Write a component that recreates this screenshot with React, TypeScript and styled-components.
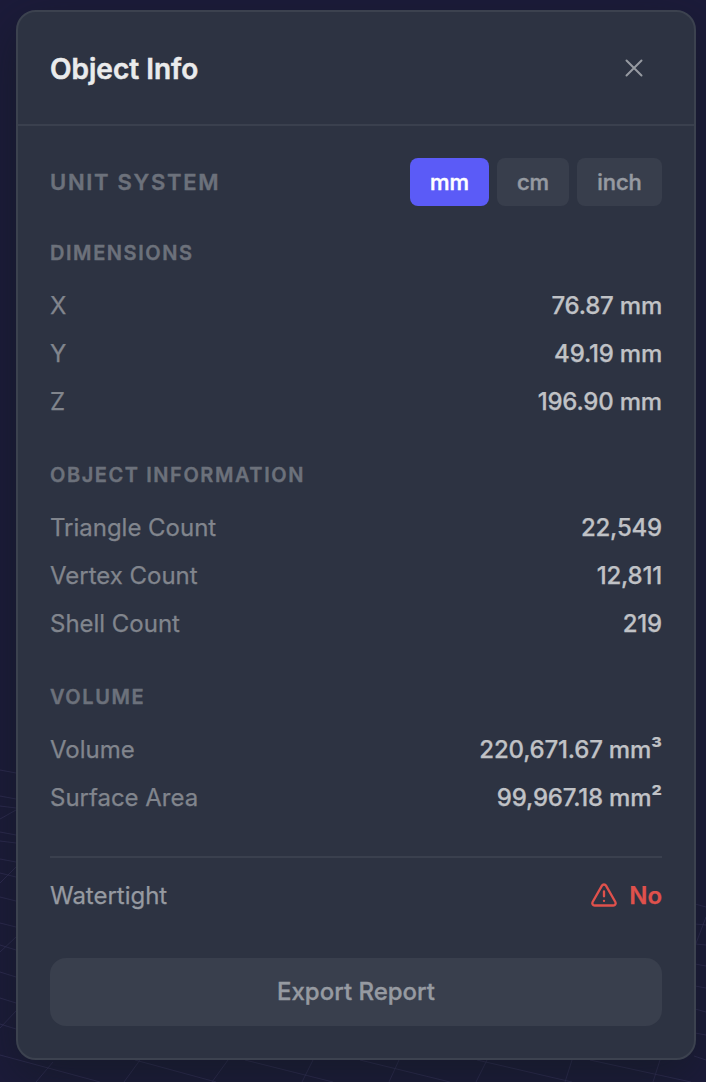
import React from 'react';
import styled, { createGlobalStyle } from 'styled-components';

const Global = createGlobalStyle`
  * { box-sizing: border-box; }
  body { margin: 0; background: #1b1a36; font-family: Inter, "Liberation Sans", sans-serif; }
`;
const Page = styled.main`
  position: relative; height: 1082px; padding: 10px 10px 22px 16px; overflow: hidden;
  background: #1c1b3a;
`;
const Floor = styled.svg` position: absolute; inset: 0; `;
const Panel = styled.section`
  position: relative;
  height: 1050px; border: 2px solid #3c424f; border-radius: 20px; background: #2d3342;
  box-shadow: 0 16px 48px rgba(18, 26, 32, 0.6);
  -webkit-text-stroke: 0.25px currentColor;
`;
const Header = styled.header`
  height: 114px; padding: 2px 32px 0; display: flex; align-items: center; justify-content: space-between;
  border-bottom: 2px solid #3a404e;
`;
const Title = styled.h1`
  margin: 0; font-size: 28px; line-height: 34px; font-weight: 600; color: #eaebec; -webkit-text-stroke: 0.5px currentColor;
`;
const Close = styled.button`
  width: 56px; height: 56px; padding: 0 0 2px; border: 0; background: none; display: grid; place-items: center; color: #969aa1;
`;
const Body = styled.div` padding: 32px; `;
const Units = styled.div` display: flex; align-items: center; justify-content: space-between; height: 48px; `;
const UnitLabel = styled.span` font-size: 22px; font-weight: 600; letter-spacing: 1.7px; color: #6c717b; -webkit-text-stroke: 0.4px currentColor; `;
const UnitGroup = styled.div` display: flex; gap: 8px; `;
const UnitButton = styled.button<{ $active?: boolean; $width: number }>`
  width: ${p => p.$width}px; height: 48px; padding: 0; border: 0; border-radius: 8px;
  font: 500 22px Inter, sans-serif; -webkit-text-stroke: 0.5px currentColor;
  background: ${p => (p.$active ? '#5b5bf7' : '#383e4c')}; color: ${p => (p.$active ? '#fff' : '#969aa1')};
`;
const Section = styled.section` margin-top: 32px; & + & { margin-top: 35px; } `;
const Heading = styled.h2`
  margin: 0 0 13px; font-size: 20px; line-height: 30px; font-weight: 600; letter-spacing: 1.57px; color: #6c717b;
  -webkit-text-stroke: 0.4px currentColor;
`;
const Row = styled.div`
  height: 48px; display: flex; align-items: center; justify-content: space-between;
  font-size: 24px; color: #81858d; letter-spacing: -0.02px;
`;
const Value = styled.span` font-weight: 500; letter-spacing: -0.2px; color: #c0c2c6; `;
const Exponent = styled.span` display: inline-block; font-weight: 600; transform: translateY(-1px); `;
const Status = styled(Row)` margin-top: 35px; height: 76px; border-top: 2px solid #3a404e; color: #969aa1; `;
const Warning = styled.span` display: flex; align-items: center; gap: 11px; font-weight: 600; color: #df514c; `;
const Export = styled.button`
  width: 100%; height: 68px; margin-top: 26px; padding: 0 0 2px; border: 0; border-radius: 16px;
  background: #393f4d; color: #969aa1; font: 500 24px Inter, sans-serif; -webkit-text-stroke: 0.35px currentColor;
`;

const units = [{ name: 'mm', width: 79 }, { name: 'cm', width: 72 }, { name: 'inch', width: 85 }];
const groups: { title: string; rows: [string, string, string?][] }[] = [
  { title: 'DIMENSIONS', rows: [['X', '76.87 mm'], ['Y', '49.19 mm'], ['Z', '196.90 mm']] },
  { title: 'OBJECT INFORMATION', rows: [['Triangle Count', '22,549'], ['Vertex Count', '12,811'], ['Shell Count', '219']] },
  { title: 'VOLUME', rows: [['Volume', '220,671.67 mm', '³'], ['Surface Area', '99,967.18 mm', '²']] },
];

export default function App() {
  return (
    <Page>
      <Global />
      <Floor width="706" height="1082" viewBox="0 0 706 1082" fill="none" stroke="#3a3560" strokeOpacity="0.6" aria-hidden="true">
        <path d="M0 770 16 773M0 796 16 799M0 806 16 808M0 832 16 835M0 841 16 843M0 859 16 862M0 873 16 877M0 897 16 901M0 923 16 927M0 945 16 950M0 972 16 977M0 998 16 1003M0 1024 16 1029M0 1055 100 1082M135 1060 216 1082M245 1060 333 1082M360 1060 450 1082M477 1060 572 1082M590 1060 691 1082M694 1056 706 1060" />
        <path d="M0 819 16 810M0 883 16 867M0 952 16 937M0 1028 16 1011M36 1082 53 1062M124 1082 140 1060M212 1082 228 1060M302 1082 313 1060M389 1082 399 1060M476 1082 487 1060M565 1082 572 1060M653 1082 660 1060M695 946 706 917M695 904 706 907M695 924 706 925M695 944 706 945M695 964 706 966M695 986 706 988M695 1009 706 1012M695 1033 706 1035" />
      </Floor>
      <Panel>
        <Header>
          <Title>Object Info</Title>
          <Close aria-label="Close">
            <svg width="18" height="18" viewBox="0 0 18 18" fill="none" stroke="currentColor" strokeWidth="2" strokeLinecap="round"><path d="M1.5 1.5 16.5 16.5M16.5 1.5 1.5 16.5" /></svg>
          </Close>
        </Header>
        <Body>
          <Units>
            <UnitLabel>UNIT SYSTEM</UnitLabel>
            <UnitGroup>{units.map(u => <UnitButton key={u.name} $width={u.width} $active={u.name === 'mm'}>{u.name}</UnitButton>)}</UnitGroup>
          </Units>
          {groups.map(g => (
            <Section key={g.title}>
              <Heading>{g.title}</Heading>
              {g.rows.map(([label, value, exponent]) => (
                <Row key={label}><span>{label}</span><Value>{value}{exponent && <Exponent>{exponent}</Exponent>}</Value></Row>
              ))}
            </Section>
          ))}
          <Status>
            <span>Watertight</span>
            <Warning>
              <svg width="28" height="28" viewBox="0 0 24 24" fill="none" stroke="currentColor" strokeWidth="2" strokeLinecap="round" strokeLinejoin="round"><path d="m21.73 18-8-14a2 2 0 0 0-3.48 0l-8 14A2 2 0 0 0 4 21h16a2 2 0 0 0 1.73-3ZM12 9v4M12 17h.01" /></svg>
              No
            </Warning>
          </Status>
          <Export>Export Report</Export>
        </Body>
      </Panel>
    </Page>
  );
}
